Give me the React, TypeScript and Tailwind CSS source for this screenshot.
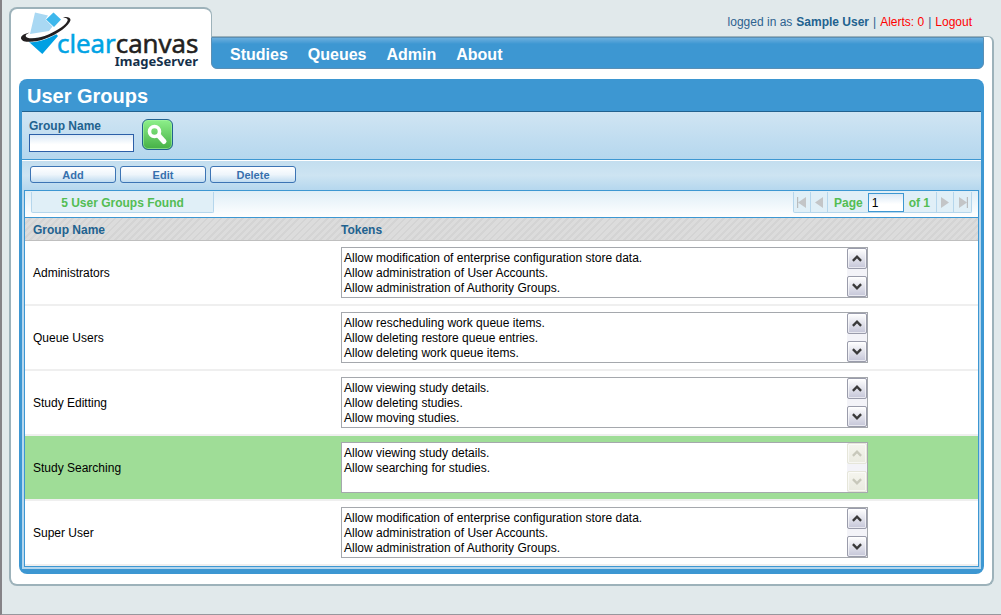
import React from "react";

const LINK_TEXT = "text-[#ff0000]";

const groups = [
  {
    name: "Administrators",
    tokens: [
      "Allow modification of enterprise configuration store data.",
      "Allow administration of User Accounts.",
      "Allow administration of Authority Groups.",
    ],
  },
  {
    name: "Queue Users",
    tokens: [
      "Allow rescheduling work queue items.",
      "Allow deleting restore queue entries.",
      "Allow deleting work queue items.",
    ],
  },
  {
    name: "Study Editting",
    tokens: ["Allow viewing study details.", "Allow deleting studies.", "Allow moving studies."],
  },
  {
    name: "Study Searching",
    tokens: ["Allow viewing study details.", "Allow searching for studies."],
    selected: true,
  },
  {
    name: "Super User",
    tokens: [
      "Allow modification of enterprise configuration store data.",
      "Allow administration of User Accounts.",
      "Allow administration of Authority Groups.",
    ],
  },
];

function Logo() {
  return (
    <svg width="182" height="60" viewBox="0 0 182 60" role="img" aria-label="ClearCanvas ImageServer">
      <path d="M14 3.5 L27 6.5 L24.5 10.5 L31.5 17.5 L28 22 L9 25 Z" fill="#a9d8f3" />
      <path d="M32.5 3.5 L40 10.5 L33 18 L25 10.5 Z" fill="#3db7ec" />
      <path d="M8 30 L30 26 L35 25 L37 27 L21.3 45 L8 33 Z" fill="#00a0e3" />
      <path
        d="M42 8.2 C47 7.4 50 8.6 49.4 11.6 C48.4 16 38 25.4 22 30.6 C13 33.4 1.5 34.2 0 29.4 C-0.4 27 3.5 24.6 8.6 23.6 C4.5 25.6 3.6 27.2 6 28.4 C10.5 30.4 20 28.6 28 25.2 C37.5 21.2 45.5 15.4 46.6 11.6 C47.2 9.6 45.4 9 42 8.2 Z"
        fill="#231f20"
        stroke="#fff"
        strokeWidth="1"
        paintOrder="stroke"
      />
      <text
        x="36"
        y="44"
        fontFamily="'Open Sans', 'Noto Sans', sans-serif"
        fontWeight="400"
        fontSize="26"
        fill="#00a3e4"
        stroke="#00a3e4"
        strokeWidth="0.6"
      >
        clear
        <tspan fill="#231f20" stroke="#231f20">
          canvas
        </tspan>
      </text>
      <text
        x="177"
        y="57"
        textAnchor="end"
        fontFamily="'Noto Sans', sans-serif"
        fontWeight="700"
        fontSize="13"
        fill="#14304a"
      >
        ImageServer
      </text>
    </svg>
  );
}

function ScrollButton({ up, disabled }: { up?: boolean; disabled?: boolean }) {
  return (
    <button
      type="button"
      disabled={disabled}
      aria-label={up ? "Scroll up" : "Scroll down"}
      className="flex h-[21px] w-5 items-center justify-center rounded-xs border border-[#9a9cab] bg-linear-to-b from-white to-[#c5c6d8] text-[#3a3a3a] inset-ring inset-ring-white/60 disabled:border-[#e6e6da] disabled:from-[#f5f5ee] disabled:to-[#eaeae0] disabled:text-[#c8c8bb]"
    >
      <svg width="10" height="7" viewBox="0 0 10 7" fill="none" stroke="currentColor" strokeWidth="2.4">
        <path d={up ? "M0.9 5.8 L5 1.7 L9.1 5.8" : "M0.9 1.2 L5 5.3 L9.1 1.2"} />
      </svg>
    </button>
  );
}

function TokenBox({ tokens, label }: { tokens: string[]; label: string }) {
  const disabled = tokens.length < 3;
  return (
    <div className="flex h-[51px] w-[527px] border border-[#a5a8ad] bg-white">
      <textarea
        readOnly
        aria-label={label}
        value={tokens.join("\n")}
        className="flex-1 resize-none overflow-hidden px-0.5 pt-[3px] leading-[15px] outline-none"
      />
      <div className="flex flex-col justify-between bg-[#f3f3f8]">
        <ScrollButton up disabled={disabled} />
        <ScrollButton disabled={disabled} />
      </div>
    </div>
  );
}

function PagerButton({ label, last, flip }: { label: string; last?: boolean; flip?: boolean }) {
  return (
    <button
      type="button"
      aria-label={label}
      className="flex w-[17px] items-center justify-center border-r border-[#b5d6ec] pt-px last:border-r-0"
    >
      <svg width="10" height="11" viewBox="0 0 10 11" className={flip ? "rotate-180" : ""}>
        <path d="M1 0 L9 5.5 L1 11 Z" fill="#c3c5c7" />
        {last && <path d="M9.4 0 V11" stroke="#b9bcbe" strokeWidth="1.2" />}
      </svg>
    </button>
  );
}

function ToolbarButton({ children }: { children: React.ReactNode }) {
  return (
    <button
      type="button"
      className="flex h-[17px] w-[86px] items-center justify-center rounded-[3px] border border-[#3c74b4] bg-linear-to-b from-white via-[#eef5fb] to-[#c0dcf0] text-[11px] leading-4 font-bold text-[#3670ad]"
    >
      {children}
    </button>
  );
}

export default function App() {
  return (
    <div className="min-h-screen border-b-2 border-l-2 border-b-[#98979d] border-l-[#858387] bg-[#e1e9eb] pt-[7px] pr-[7px] pb-7 pl-[7px] font-['Liberation_Sans',Arial,sans-serif] text-xs text-black">
      <header className="flex">
        <div className="h-[62px] w-[203px] rounded-t-lg border-t-2 border-r border-l-2 border-[#9db2ba] bg-white pl-2.5">
          <a href="#home">
            <Logo />
          </a>
        </div>
        <div className="-ml-px flex flex-1 flex-col">
          <p className="flex h-[29px] justify-end gap-1 pt-2 pr-[22px] leading-[14px] text-[#2d628f]">
            <span>logged in as</span>
            <b className="text-[#22628f]">Sample User</b>
            <span>|</span>
            <a href="#alerts" className={LINK_TEXT}>
              Alerts: 0
            </a>
            <span>|</span>
            <a href="#logout" className={LINK_TEXT}>
              Logout
            </a>
          </p>
          <div className="flex-1 rounded-tr-md border-t border-r-2 border-[#9db2ba] bg-white pr-2">
            <nav className="flex h-full items-center gap-5 rounded-b-md border border-[#5a8fb5] bg-[#3d97d2] bg-linear-to-b from-[#6bafde] via-[#3d97d2] via-20% to-[#3d97d2] pt-[3px] pl-[18px] text-base font-bold text-white">
              <a href="#studies">Studies</a>
              <a href="#queues">Queues</a>
              <a href="#admin">Admin</a>
              <a href="#about">About</a>
            </nav>
          </div>
        </div>
      </header>

      <main className="rounded-b-lg border-x-2 border-b-2 border-[#9db2ba] bg-white px-2 pt-2.5 pb-2.5">
        <section className="rounded-lg bg-[#3d97d2] px-[3px] pb-[5px]">
          <h1 className="h-8 pl-[5px] text-xl leading-[34px] font-bold text-white">User Groups</h1>

          <form className="flex h-12 gap-2 border-t border-[#22628f] bg-linear-to-b from-[#d0e5f3] to-[#b5d7ee] pt-[7px] pl-[7px]">
            <div className="flex flex-col">
              <label htmlFor="group-name" className="leading-[15px] font-bold text-[#22628f]">
                Group Name
              </label>
              <input
                id="group-name"
                type="text"
                className="h-[18px] w-[105px] border border-[#2c5fa8] bg-linear-to-b from-[#dbe9f6] to-white to-60% px-0.5 outline-none"
              />
            </div>
            <button
              type="button"
              aria-label="Search"
              className="flex size-[31px] items-center justify-center rounded-md border border-[#22628f] bg-linear-to-b from-[#8df08a] to-[#45b045] inset-ring inset-ring-[#a5f5a5]/60"
            >
              <svg width="27" height="27" viewBox="0 0 27 27" fill="none" stroke="#fff">
                <circle cx="10.5" cy="10.5" r="5" strokeWidth="3.6" />
                <path d="M15 15 L20 20.5" strokeWidth="5" strokeLinecap="round" />
              </svg>
            </button>
          </form>

          <div className="border-t border-[#3d97d2] bg-[#b5d7ee] px-0.5 pb-0.5">
            <div className="-mx-0.5 flex h-[30px] gap-1 border-t border-white bg-linear-to-b from-[#c3deef] via-[#cde4f2] to-[#b5d7ee] pt-[5px] pl-2">
              <ToolbarButton>Add</ToolbarButton>
              <ToolbarButton>Edit</ToolbarButton>
              <ToolbarButton>Delete</ToolbarButton>
            </div>

            <div className="border border-[#3d97d2] bg-white">
              <div className="flex h-[27px] items-start justify-between border-b border-[#3d97d2] bg-linear-to-b from-[#dfeef7] to-white px-1.5 pt-px font-bold text-[#53bd53]">
                <div className="h-[21px] w-[183px] rounded-b-xs border-x border-b border-[#b5d6ec] bg-[#e0eff7] text-center leading-[22px]">
                  5 User Groups Found
                </div>
                <div className="flex h-[21px] items-stretch rounded-b-xs border-x border-b border-[#b5d6ec] bg-[#e0eff7]">
                  <PagerButton label="First page" last flip />
                  <PagerButton label="Previous page" flip />
                  <div className="flex items-center gap-[5px] border-r border-[#b5d6ec] px-1.5 pt-px">
                    <label htmlFor="page">Page</label>
                    <input
                      id="page"
                      type="text"
                      defaultValue="1"
                      className="h-[19px] w-9 border border-[#3d97d2] bg-linear-to-b from-[#dbe9f6] to-white to-60% px-[3px] font-normal text-black outline-none"
                    />
                    <span>of 1</span>
                  </div>
                  <PagerButton label="Next page" />
                  <PagerButton label="Last page" last />
                </div>
              </div>

              <table className="w-full table-fixed border-collapse text-left">
                <thead>
                  <tr className="h-[23px] bg-[repeating-linear-gradient(135deg,#dcdcdc_0px,#dcdcdc_3px,#d4d4d4_3px,#d4d4d4_5px)] text-[#22628f] shadow-[inset_0_-1px_0_#bfbfbf]">
                    <th className="w-[308px] p-0 pl-2">Group Name</th>
                    <th className="p-0 pl-2">Tokens</th>
                  </tr>
                </thead>
                <tbody>
                  {groups.map((g) => (
                    <tr
                      key={g.name}
                      className={
                        g.selected
                          ? "h-[65px] bg-[#9fdd97] shadow-[inset_0_-2px_0_#efefef]"
                          : "h-[65px] shadow-[inset_0_-2px_0_#efefef]"
                      }
                    >
                      <td className="p-0 pb-0.5 pl-2">{g.name}</td>
                      <td className="p-0 pb-0.5 pl-2">
                        <TokenBox tokens={g.tokens} label={`Tokens for ${g.name}`} />
                      </td>
                    </tr>
                  ))}
                </tbody>
              </table>
            </div>
          </div>
        </section>
      </main>
    </div>
  );
}
